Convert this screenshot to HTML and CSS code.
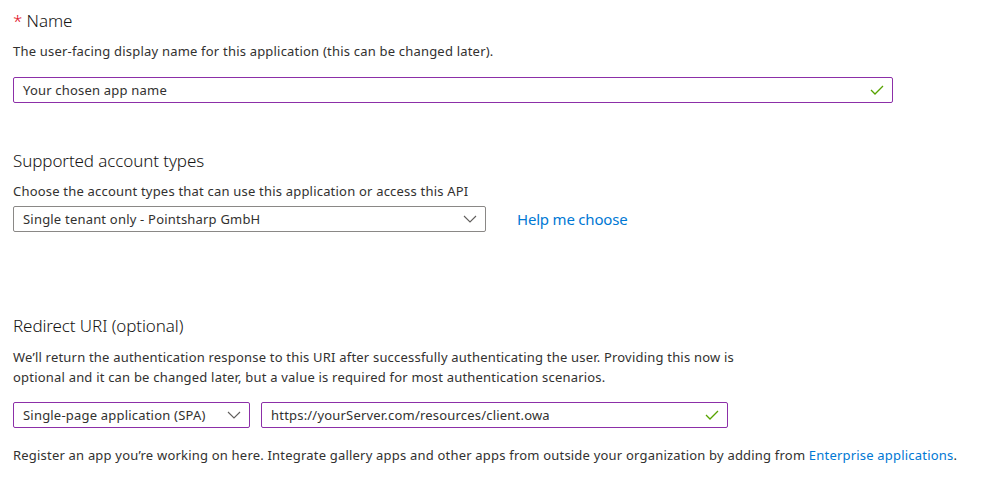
FILE: index.html
```html
<!DOCTYPE html>
<html>
<head>
<meta charset="utf-8">
<title>Register an application</title>
<link rel="stylesheet" href="styles.css">
</head>
<body>
<div class="form">

	<div class="section section-name">
		<h2 class="title"><span class="required">*</span> Name</h2>
		<p class="desc">The user-facing display name for this application (this can be changed later).</p>
		<div class="textbox textbox-name valid">
			<span class="value">Your chosen app name</span>
			<svg class="check" width="14" height="10" viewBox="0 0 14 10"><path d="M1 5 L5 9 L13 1" fill="none" stroke="#57a300" stroke-width="1.3"/></svg>
		</div>
	</div>

	<div class="section section-accounts">
		<h2 class="title">Supported account types</h2>
		<p class="desc">Choose the account types that can use this application or access this API</p>
		<div class="row">
			<div class="dropdown dropdown-accounts">
				<span class="value">Single tenant only - Pointsharp GmbH</span>
				<svg class="chevron" width="14" height="8" viewBox="0 0 14 8"><path d="M1 1 L7 7 L13 1" fill="none" stroke="#605e5c" stroke-width="1.1"/></svg>
			</div>
			<a class="link help" href="#">Help me choose</a>
		</div>
	</div>

	<div class="section section-redirect">
		<h2 class="title">Redirect URI (optional)</h2>
		<p class="desc desc-wide">We’ll return the authentication response to this URI after successfully authenticating the user. Providing this now is optional and it can be changed later, but a value is required for most authentication scenarios.</p>
		<div class="row">
			<div class="dropdown dropdown-platform valid">
				<span class="value">Single-page application (SPA)</span>
				<svg class="chevron" width="14" height="8" viewBox="0 0 14 8"><path d="M1 1 L7 7 L13 1" fill="none" stroke="#605e5c" stroke-width="1.1"/></svg>
			</div>
			<div class="textbox textbox-uri valid">
				<span class="value">https://yourServer.com/resources/client.owa</span>
				<svg class="check" width="14" height="10" viewBox="0 0 14 10"><path d="M1 5 L5 9 L13 1" fill="none" stroke="#57a300" stroke-width="1.3"/></svg>
			</div>
		</div>
	</div>

	<p class="note">Register an app you’re working on here. Integrate gallery apps and other apps from outside your organization by adding from <a class="link" href="#">Enterprise applications</a>.</p>

</div>
</body>
</html>
```

FILE: styles.css
```css
body {
	background-color: #fff;
	color: #323130;
	font: normal 13px "Noto Sans", "Open Sans", sans-serif;
	letter-spacing: 0.2px;
	margin: 0;
}
.form {
	padding: 0 13px;
}
.title {
	color: #161514;
	font-size: 17px;
	font-weight: 300;
	letter-spacing: -0.1px;
	line-height: 24px;
	margin: 0;
}
.required {
	color: #e00b1c;
}
.desc {
	line-height: 20px;
	margin: 0;
}
.section-name {
	padding-top: 9px;
}
.section-name .desc {
	margin: 8px 0 16px 0;
}
.section-accounts {
	padding-top: 46px;
}
.section-accounts .desc {
	margin: 8px 0 5px 0;
}
.section-redirect {
	padding-top: 82px;
}
.section-redirect .desc {
	margin: 9px 0 15px 0;
	width: 760px;
}
.row {
	align-items: center;
	display: flex;
	gap: 11px;
}
.textbox, .dropdown {
	align-items: center;
	border: 1px solid #8a8886;
	border-radius: 2px;
	box-sizing: border-box;
	display: flex;
	height: 26px;
	justify-content: space-between;
	padding: 0 8px 0 9px;
}
.valid {
	border-color: #8c2fa8;
}
.textbox-name {
	width: 880px;
}
.dropdown-accounts {
	width: 473px;
}
.dropdown-platform {
	width: 237px;
}
.textbox-uri {
	width: 467px;
}
.help {
	font-size: 15px;
	letter-spacing: -0.2px;
	margin-left: 20px;
}
.link {
	color: #0078d4;
	text-decoration: none;
}
.note {
	line-height: 20px;
	margin: 17px 0 0 0;
}
```
